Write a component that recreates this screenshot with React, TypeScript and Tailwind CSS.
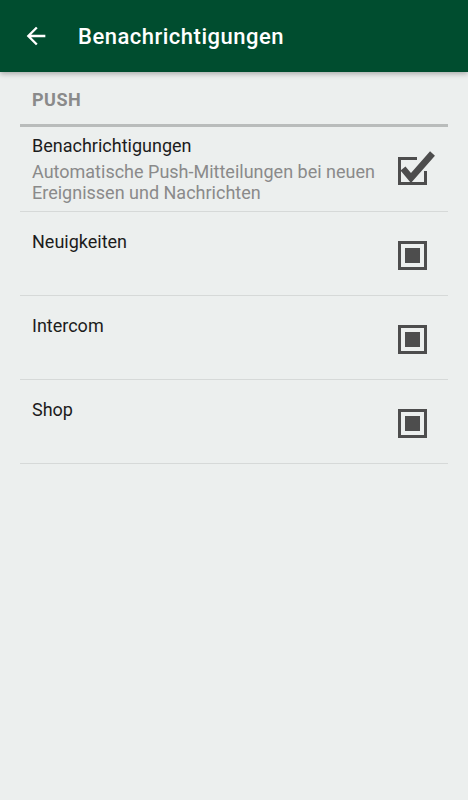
import React from "react";

type Item = { title: string; summary?: string; checked: boolean };

const items: Item[] = [
  {
    title: "Benachrichtigungen",
    summary: "Automatische Push-Mitteilungen bei neuen Ereignissen und Nachrichten",
    checked: true,
  },
  { title: "Neuigkeiten", checked: false },
  { title: "Intercom", checked: false },
  { title: "Shop", checked: false },
];

function CheckBox({ checked }: { checked: boolean }) {
  if (checked) {
    return (
      <svg width="40" height="40" viewBox="0 0 40 40" className="block">
        <path d="M21 9.5H3.5V34.5H29.5V22" fill="none" stroke="#4d4d4d" strokeWidth="3" />
        <path d="M7 19.5L15 29L36.5 4.5" fill="none" stroke="#4d4d4d" strokeWidth="6.5" strokeLinejoin="miter" />
      </svg>
    );
  }
  return (
    <svg width="40" height="40" viewBox="0 0 40 40" className="block">
      <rect x="3.5" y="5.5" width="26" height="26" fill="none" stroke="#4d4d4d" strokeWidth="3" />
      <rect x="9" y="11" width="15" height="15" fill="#4d4d4d" />
    </svg>
  );
}

export default function App() {
  return (
    <div className="min-h-[800px] w-full bg-[#ecefee] font-['Roboto',sans-serif]">
      <header className="relative z-10 flex h-[72px] items-center bg-[#004d2f] pl-[22px] shadow-[0_2px_5px_rgba(0,0,0,0.28)]">
        <svg width="28" height="28" viewBox="0 0 24 24" fill="#ffffff">
          <path d="M20 11H7.83l5.59-5.59L12 4l-8 8 8 8 1.41-1.41L7.83 13H20v-2z" />
        </svg>
        <h1 className="ml-[28px] text-[22px] font-medium tracking-[0.5px] text-white">Benachrichtigungen</h1>
      </header>

      <main className="mx-[20px]">
        <div className="border-b-[3px] border-[#b9bcbb] pb-[14px] pl-3 pt-[17px]">
          <h2 className="text-[18px] font-bold leading-[21px] tracking-[0.5px] text-[#8a8a8a]">PUSH</h2>
        </div>

        {items.map((item) =>
          item.summary ? (
            <div
              key={item.title}
              className="flex h-[85px] items-center border-b border-[#d6d9d8] pl-3 pr-[12px]"
            >
              <div className="flex-1 pr-2">
                <div className="text-[18px] leading-[22px] text-[#1c1c1c]">{item.title}</div>
                <div className="mt-[4px] text-[18px] leading-[21px] text-[#8a8a8a]">{item.summary}</div>
              </div>
              <CheckBox checked={item.checked} />
            </div>
          ) : (
            <div
              key={item.title}
              className="flex h-[84px] items-start border-b border-[#d6d9d8] pl-3 pr-[12px]"
            >
              <div className="flex-1 pt-[19px] text-[18px] leading-[22px] text-[#1c1c1c]">{item.title}</div>
              <div className="self-center pt-[6px]">
                <CheckBox checked={item.checked} />
              </div>
            </div>
          )
        )}
      </main>
    </div>
  );
}
